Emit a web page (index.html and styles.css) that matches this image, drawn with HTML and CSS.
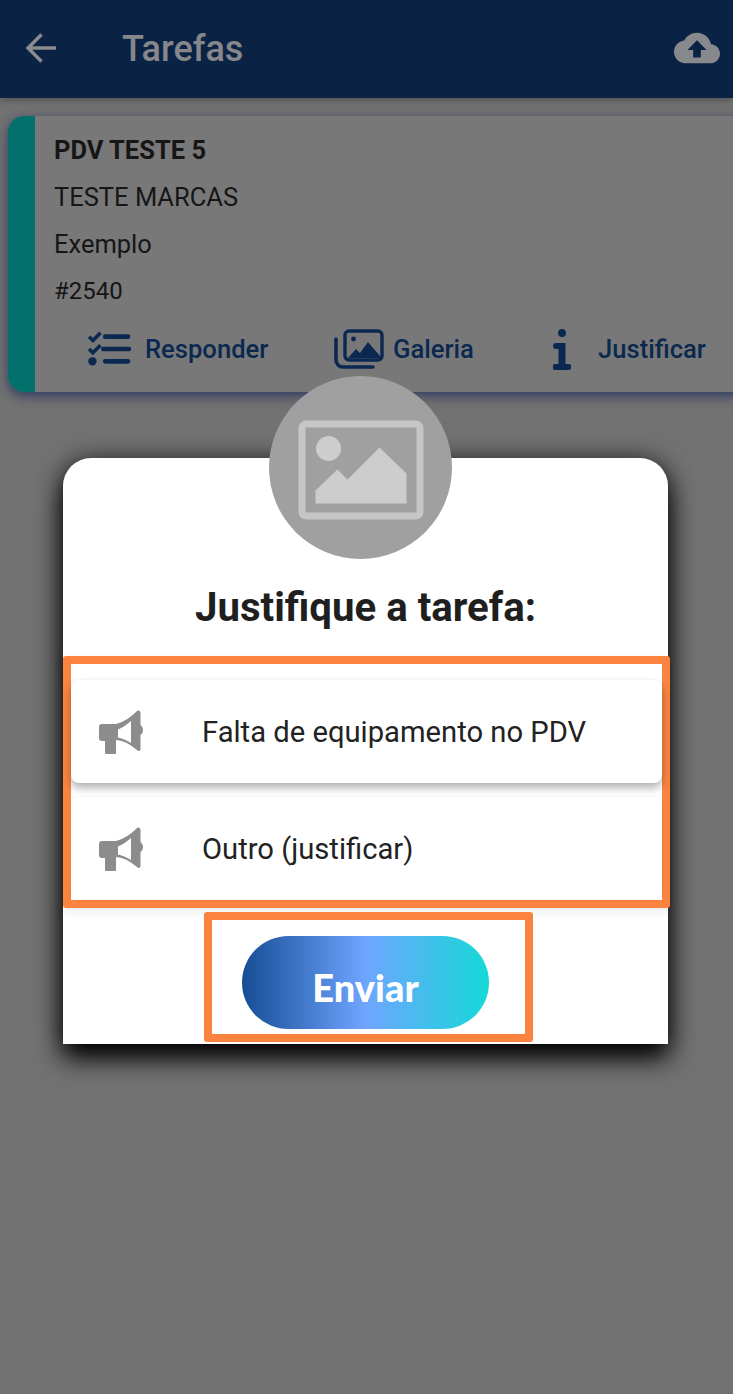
FILE: index.html
```html
<!DOCTYPE html>
<html lang="en">
<head>
    <meta charset="UTF-8">
    <meta name="viewport" content="width=device-width, initial-scale=1.0">
    <title>Tarefas</title>
    <link rel="stylesheet" href="styles.css">
</head>
<body>

    <!-- App bar -->
    <header class="appbar">
        <svg class="back-icon" viewBox="0 0 32 32"><path d="M31 16H4M16.500 2.500 3 16l13.500 13.500" fill="none" stroke="#8a8c90" stroke-width="3.400"/></svg>
        <h1 class="appbar-title">Tarefas</h1>
        <svg class="upload-icon" viewBox="0 0 24 24"><path fill="#87898d" d="M19.35 10.04C18.67 6.59 15.64 4 12 4 9.11 4 6.6 5.64 5.35 8.04 2.34 8.36 0 10.91 0 14c0 3.31 2.69 6 6 6h13c2.76 0 5-2.24 5-5 0-2.64-2.05-4.78-4.65-4.96zM14 13v4h-4v-4H7l5-5 5 5h-3z"/></svg>
    </header>

    <!-- Task card -->
    <section class="task-card">
        <div class="task-bar"></div>
        <div class="task-content">
            <p class="task-line task-name">PDV TESTE 5</p>
            <p class="task-line">TESTE MARCAS</p>
            <p class="task-line">Exemplo</p>
            <p class="task-line task-id">#2540</p>
            <div class="task-actions">
                <div class="action action-answer">
                    <svg class="action-icon" width="44" height="36" viewBox="0 0 46 38">
                        <path d="M2 6l4 4 8-8M2 19l4 4 8-8" fill="none" stroke="#0a2850" stroke-width="3.800"/>
                        <circle cx="5.500" cy="32" r="4.400" fill="#0a2850"/>
                        <path d="M19 6h24M17 19h27M19 32h24" fill="none" stroke="#0a2850" stroke-width="5" stroke-linecap="round"/>
                    </svg>
                    <span>Responder</span>
                </div>
                <div class="action action-gallery">
                    <svg class="action-icon" width="50" height="40" viewBox="0 0 50 40">
                        <path d="M2 10v21a7 7 0 0 0 7 7h30" fill="none" stroke="#0a2850" stroke-width="3.600" stroke-linecap="round"/>
                        <rect x="11" y="2" width="37" height="29" rx="4" fill="none" stroke="#0a2850" stroke-width="3.400"/>
                        <circle cx="19.500" cy="10" r="2.400" fill="#0a2850"/>
                        <path d="M14 29l8-9 4 4 8-11 12 14v2z" fill="#0a2850"/>
                    </svg>
                    <span>Galeria</span>
                </div>
                <div class="action action-justify">
                    <svg class="action-icon" width="18" height="41" viewBox="0 0 18 41">
                        <circle cx="9" cy="4" r="4" fill="#0a2850"/>
                        <path d="M3 14h9.500v21h3a2.750 2.750 0 0 1 0 6h-13a3 3 0 0 1 0-6h3V20H3a3 3 0 0 1 0-6z" fill="#0a2850"/>
                    </svg>
                    <span>Justificar</span>
                </div>
            </div>
        </div>
    </section>

    <!-- Dialog -->
    <div class="dialog">
        <div class="dialog-avatar">
            <svg width="128" height="104" viewBox="0 0 128 104">
                <rect x="5" y="6" width="118" height="92" rx="4" fill="none" stroke="#c6c6c6" stroke-width="7"/>
                <circle cx="31.500" cy="30.500" r="12.500" fill="#cdcdcd"/>
                <path d="M18.500 85.500v-13l22-21 10 10 32-32 27 26v30z" fill="#cdcdcd"/>
            </svg>
        </div>
        <h2 class="dialog-title">Justifique a tarefa:</h2>
        <div class="highlight options">
            <div class="option option-raised">
                <svg class="option-icon" width="44" height="44"><use href="#bullhorn"/></svg>
                <span>Falta de equipamento no PDV</span>
            </div>
            <div class="option">
                <svg class="option-icon" width="44" height="44"><use href="#bullhorn"/></svg>
                <span>Outro (justificar)</span>
            </div>
        </div>
        <div class="highlight send-box">
            <button class="send-button">Enviar</button>
        </div>
    </div>

    <svg class="icon-defs" width="0" height="0">
        <symbol id="bullhorn" viewBox="0 0 44 44">
            <path fill="#8c8c8c" fill-rule="evenodd" d="M3 14h14c8-2 15-7 21-13 2-1 3.500 0 3.500 2v12c1.500 1 2.500 3 2.500 5s-1 4-2.500 5v14c0 2-2 3-3.500 1-6-5-12-9-21-10v13c0 1-1 1-2 1H8c-1 0-2 0-2-1V31H3c-2 0-3-1-3-3V17c0-2 1-3 3-3zM19 19.500v8c5 1 9 3 13 5.500V11c-4 3.500-8 6.500-13 8.500z"/>
        </symbol>
    </svg>

</body>
</html>
```

FILE: styles.css
```css
/* General Styling */
body {
    font-family: 'Roboto', sans-serif;
    background: #727272;
    margin: 0;
    padding: 0;
    height: 1394px;
    overflow: hidden;
    position: relative;
    color: #161616;
}

/* App bar */
.appbar {
    height: 98px;
    background: #0a2345;
    display: flex;
    align-items: center;
    padding: 0 13px 2px 25px;
    box-sizing: border-box;
    box-shadow: 0 3px 6px rgba(0, 0, 0, 0.25);
}

.back-icon {
    width: 32px;
    height: 32px;
}

.appbar-title {
    margin: 0 0 0 65px;
    padding-top: 2px;
    font-size: 36px;
    font-weight: 500;
    color: #85878b;
    flex: 1;
}

.upload-icon {
    width: 46px;
    height: 46px;
}

/* Task card */
.task-card {
    margin: 18px -20px 0 8px;
    height: 276px;
    display: flex;
    background: #787878;
    border-radius: 16px;
    overflow: hidden;
    box-shadow: 0 4px 12px rgba(20, 35, 90, 0.7);
}

.task-bar {
    width: 27px;
    background: #04706c;
}

.task-content {
    flex: 1;
    padding: 11px 0 0 19px;
}

.task-line {
    margin: 0;
    font-size: 25.500px;
    line-height: 47px;
    height: 47px;
}

.task-name {
    font-weight: 700;
}

.task-id {
    font-size: 24px;
}

.task-actions {
    display: grid;
    grid-template-columns: 248px 218px 1fr;
    margin: 12px 0 0 32px;
    color: #0a2850;
    font-size: 25.600px;
    font-weight: 500;
}

.action {
    display: flex;
    align-items: center;
    height: 44px;
}

.action-answer .action-icon {
    margin: 0 14px 0 1px;
}

.action-gallery .action-icon {
    margin-right: 9px;
}

.action-justify .action-icon {
    margin: 0 27px 0 1px;
}

/* Dialog */
.dialog {
    position: absolute;
    top: 458px;
    left: 63px;
    width: 605px;
    height: 586px;
    background: #ffffff;
    border-radius: 28px 28px 0 0;
    box-shadow: 0 14px 26px #000000, 0 0 24px rgba(0, 0, 0, 0.5);
}

.dialog-avatar {
    position: absolute;
    top: -82px;
    left: 206px;
    width: 183px;
    height: 183px;
    padding-top: 4px;
    box-sizing: border-box;
    border-radius: 50%;
    background: #a0a0a0;
    display: flex;
    align-items: center;
    justify-content: center;
}

.dialog-title {
    margin: 0;
    padding-top: 124px;
    height: 74px;
    line-height: 52px;
    font-size: 40.200px;
    font-weight: 700;
    text-align: center;
    color: #1f1f1f;
}

/* Orange marks */
.highlight {
    border: 8px solid #fa8340;
    border-radius: 3px;
    box-sizing: border-box;
    background: #ffffff;
}

.options {
    width: 607px;
    height: 252px;
    padding-top: 16px;
    box-shadow: 0 4px 10px rgba(0, 0, 0, 0.08);
}

.option {
    height: 103px;
    display: flex;
    align-items: center;
    padding-left: 28px;
    border-radius: 8px;
    box-shadow: 0 0 3px rgba(0, 0, 0, 0.08);
    font-size: 29.200px;
    color: #222222;
}

.option-raised {
    margin-bottom: 14px;
    box-shadow: 0 0 2px rgba(0, 0, 0, 0.06), 0 5px 9px rgba(0, 0, 0, 0.3);
}

.option-icon {
    margin-right: 59px;
}

.send-box {
    width: 329px;
    height: 130px;
    margin: 4px 0 0 141px;
    padding: 16px 0 0 30px;
}

.send-button {
    display: block;
    width: 247px;
    height: 93px;
    padding: 8px 0 0;
    border: none;
    border-radius: 47px;
    background: linear-gradient(90deg, #164d95 0%, #6fa5ff 50%, #14d9d7 100%);
    color: #ffffff;
    font-family: 'Lato', sans-serif;
    font-size: 38px;
    font-weight: 900;
}

.icon-defs {
    position: absolute;
}
```
